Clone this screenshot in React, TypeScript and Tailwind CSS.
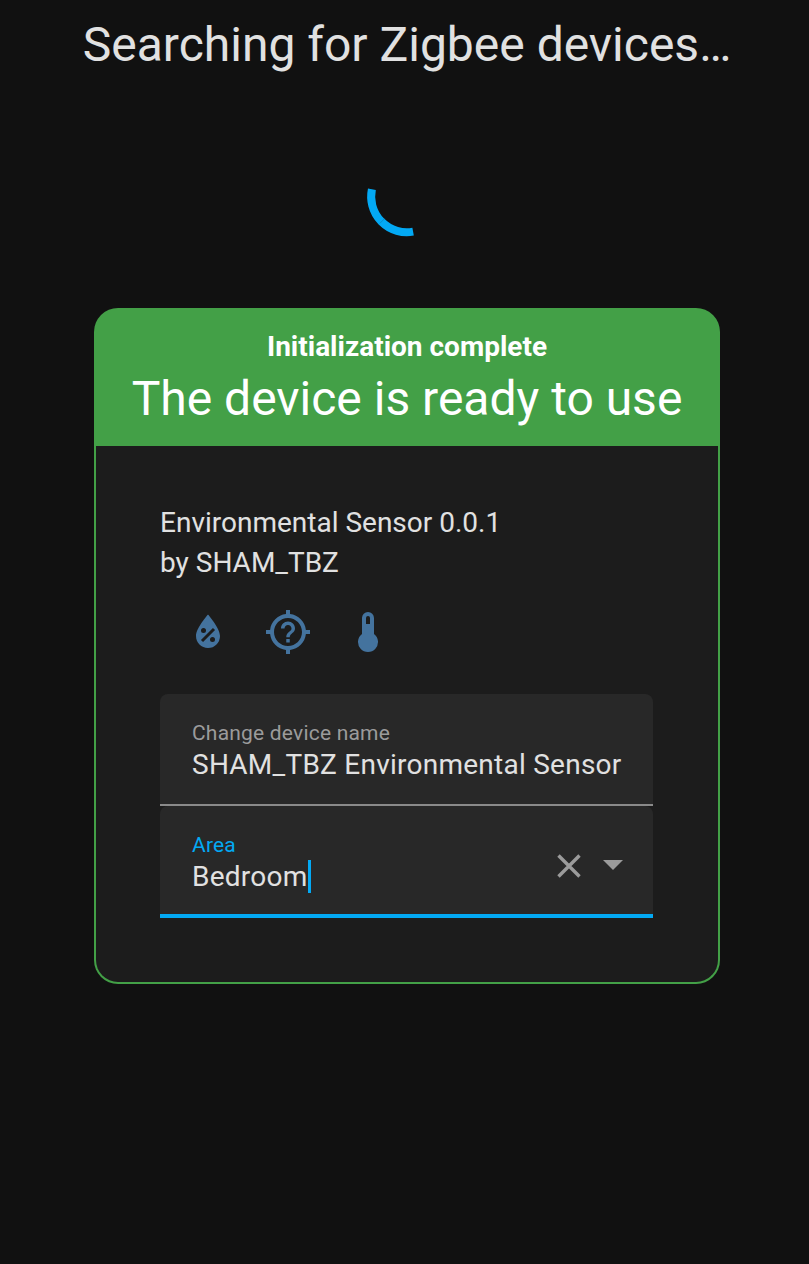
const icons = [
  'M12,3.25C12,3.25 6,10 6,14C6,17.32 8.69,20 12,20A6,6 0 0,0 18,14C18,10 12,3.25 12,3.25M14.47,9.97L15.53,11.03L9.53,17.03L8.47,15.97M9.75,10A1.25,1.25 0 0,1 11,11.25A1.25,1.25 0 0,1 9.75,12.5A1.25,1.25 0 0,1 8.5,11.25A1.25,1.25 0 0,1 9.75,10M14.25,14.5A1.25,1.25 0 0,1 15.5,15.75A1.25,1.25 0 0,1 14.25,17A1.25,1.25 0 0,1 13,15.75A1.25,1.25 0 0,1 14.25,14.5Z',
  'M3.05 13H1V11H3.05C3.5 6.83 6.83 3.5 11 3.05V1H13V3.05C17.17 3.5 20.5 6.83 20.95 11H23V13H20.95C20.5 17.17 17.17 20.5 13 20.95V23H11V20.95C6.83 20.5 3.5 17.17 3.05 13M12 5C8.13 5 5 8.13 5 12S8.13 19 12 19 19 15.87 19 12 15.87 5 12 5M11.13 17.25H12.88V15.5H11.13V17.25M12 6.75C10.07 6.75 8.5 8.32 8.5 10.25H10.25C10.25 9.28 11.03 8.5 12 8.5S13.75 9.28 13.75 10.25C13.75 12 11.13 11.78 11.13 14.63H12.88C12.88 12.66 15.5 12.44 15.5 10.25C15.5 8.32 13.93 6.75 12 6.75Z',
  'M15 13V5A3 3 0 0 0 9 5V13A5 5 0 1 0 15 13M12 4A1 1 0 0 1 13 5V8H11V5A1 1 0 0 1 12 4Z',
];

function Spinner() {
  return (
    <svg className="size-24" viewBox="0 0 96 96" fill="none">
      <path d="M12.9 41.3A35.6 35.6 0 0 0 54.1 83.6" stroke="#03a9f4" strokeWidth="8" />
      <path d="M20.8 75.4L25.4 70.8" stroke="#0b87c0" strokeWidth="0.8" />
    </svg>
  );
}

function DeviceCard() {
  return (
    <section className="mt-16 ml-[94px] flex h-[676px] w-[626px] flex-col">
      <header className="flex h-[138px] flex-col items-center rounded-t-3xl bg-[#43a047] pt-[19px] text-white">
        <div className="text-[28px] leading-10 font-bold whitespace-nowrap">Initialization complete</div>
        <h2 className="text-5xl leading-[64px] font-normal whitespace-nowrap">The device is ready to use</h2>
      </header>
      <div className="flex-1 rounded-b-3xl border-x-2 border-b-2 border-[#43a047] bg-[#1c1c1c] px-16 pt-[57px]">
        <div className="text-[28px] leading-10">
          <div>Environmental Sensor 0.0.1</div>
          <div>by SHAM_TBZ</div>
        </div>
        <div className="mt-[25px] ml-6 flex gap-8">
          {icons.map((d) => (
            <svg key={d} className="size-12" viewBox="0 0 24 24" fill="#44739e">
              <path d={d} />
            </svg>
          ))}
        </div>
        <div className="mt-[38px] w-[493px]">
          <div className="h-28 rounded-t-lg border-b-2 border-[#8a8a8a] bg-[#282828] px-8 pt-[26px]">
            <div className="text-[21px] leading-[26px] tracking-[0.2px] text-[#9b9b9b]">Change device name</div>
            <div className="text-[28px] leading-[38px] tracking-[0.25px] whitespace-nowrap">SHAM_TBZ Environmental Sensor</div>
          </div>
          <div className="flex h-28 items-start justify-between rounded-t-lg border-b-4 border-[#03a9f4] bg-[#282828] pr-4 pl-8">
            <div className="pt-[26px]">
              <div className="text-[21px] leading-[26px] tracking-[0.2px] text-[#03a9f4]">Area</div>
              <div className="flex items-start text-[28px] leading-[38px] tracking-[0.25px]">
                Bedroom
                <span className="mt-0.5 h-[33px] w-[3px] bg-[#03a9f4]" />
              </div>
            </div>
            <div className="flex items-center pt-9">
              <svg className="mr-[-4px] size-12" viewBox="0 0 48 48" stroke="#9b9b9b" strokeWidth="3.4">
                <path d="M13.5 13.5L34.5 34.5M34.5 13.5L13.5 34.5" />
              </svg>
              <svg className="size-12" viewBox="0 0 48 48" fill="#9b9b9b">
                <path d="M14 18h20L24 28z" />
              </svg>
            </div>
          </div>
        </div>
      </div>
    </section>
  );
}

export default function App() {
  return (
    <main className="h-[1264px] w-[809px] overflow-hidden bg-[#111111] font-['Roboto',sans-serif] text-[#e1e1e1]">
      <h1 className="ml-[5px] pt-[13px] text-center text-5xl leading-[64px] font-normal whitespace-nowrap">Searching for Zigbee devices…</h1>
      <div className="mt-[71px] flex justify-center pl-1">
        <Spinner />
      </div>
      <DeviceCard />
    </main>
  );
}
